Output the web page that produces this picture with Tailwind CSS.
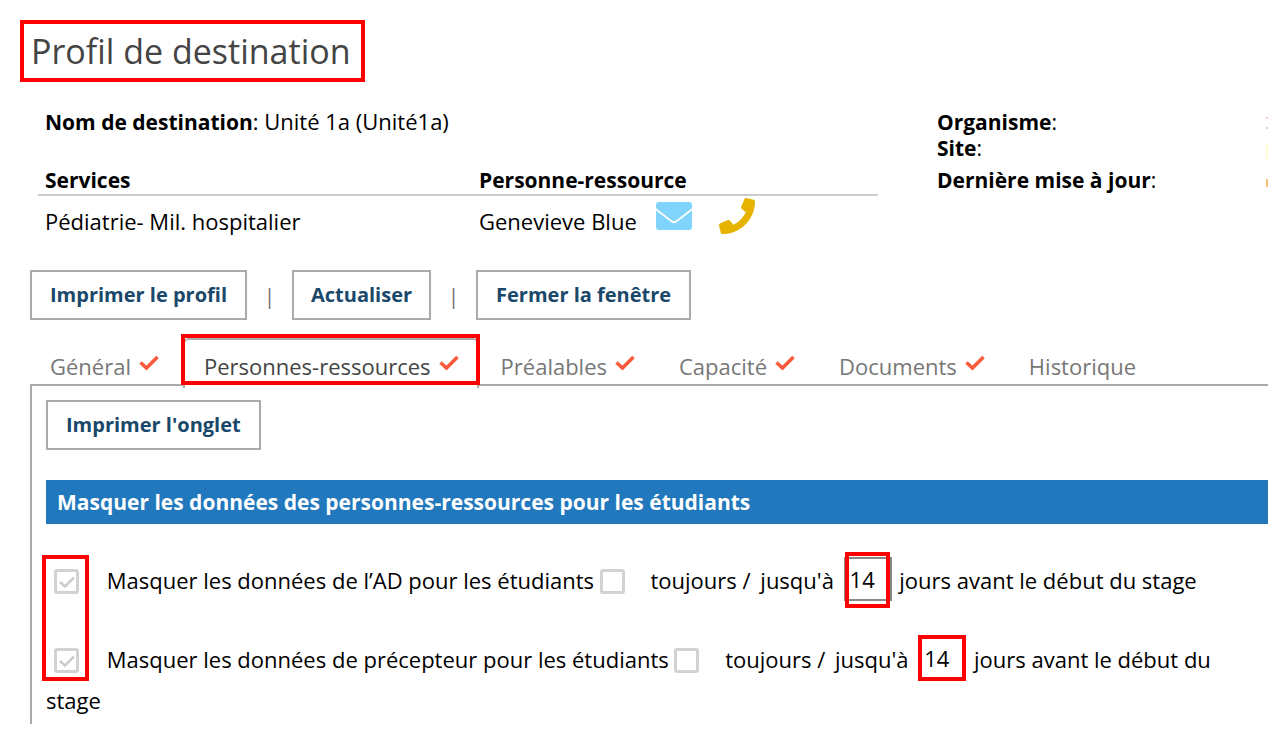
<!DOCTYPE html>
<html lang="fr">
<head>
    <meta charset="UTF-8">
    <meta name="viewport" content="width=device-width, initial-scale=1.0">
    <title>Profil de destination</title>
    <script src="https://cdn.jsdelivr.net/npm/@tailwindcss/browser@4"></script>
</head>
<body class="bg-white text-black text-[22px] font-['Open_Sans',sans-serif]">
    <svg class="hidden">
        <symbol id="check" viewBox="0 0 20 16"><path d="M1.5 7.5 L7.5 13 L18.5 2" fill="none" stroke="#fb5a3c" stroke-width="3.6"/></symbol>
    </svg>
    <div class="pt-5 pl-5 pr-[10px]">
        <h1 class="inline-block border-4 border-[#ff0000] pl-[7px] pr-[10px] text-[34px] leading-[54px] text-[#444]">Profil de destination</h1>

        <div class="pl-[10px]">
            <!-- Destination info -->
            <div class="flex justify-between pt-[26px]">
                <div class="w-[848px] pl-2">
                    <p class="pl-[7px] leading-[26px]"><b class="text-[21px] font-bold">Nom de destination</b>: Unité 1a (Unité1a)</p>
                    <table class="mt-8 w-full text-left">
                        <thead>
                            <tr class="border-b-2 border-[#ccc] text-[21px] leading-[27px]">
                                <th class="w-[434px] pl-[7px] font-bold">Services</th>
                                <th class="pl-[7px] font-bold">Personne-ressource</th>
                            </tr>
                        </thead>
                        <tbody>
                            <tr class="leading-[26px] align-bottom">
                                <td class="pl-[7px] pt-[2px]">Pédiatrie- Mil. hospitalier</td>
                                <td class="pl-[7px] pt-[2px]">
                                    <div class="flex items-end">
                                        <span>Genevieve Blue</span>
                                        <a href="#" aria-label="Courriel" class="ml-[19px] mb-1">
                                            <svg class="w-9 h-7" viewBox="0 0 36 28">
                                                <path d="M3 0H33Q36 0 36 3V5Q36 6 35 7L20 18.500Q18 20 16 18.500L1 7Q0 6 0 5V3Q0 0 3 0Z" fill="#80d4fb"/>
                                                <path d="M0 8.500L15 20Q18 22.500 21 20L36 8.500V25Q36 28 33 28H3Q0 28 0 25Z" fill="#80d4fb"/>
                                            </svg>
                                        </a>
                                        <a href="#" aria-label="Téléphone" class="ml-[27px]">
                                            <svg class="w-9 h-9" viewBox="0 0 512 512">
                                                <path fill="#e6b400" d="M493.400 24.600l-104-24c-11.300-2.600-22.900 3.300-27.500 13.900l-48 112c-4.200 9.800-1.400 21.300 6.900 28l60.600 49.600c-36 76.700-98.900 140.500-177.200 177.200l-49.600-60.600c-6.800-8.300-18.200-11.100-28-6.900l-112 48C3.900 366.500-2 378.100.6 389.400l24 104C27.100 504.200 36.700 512 48 512c256.100 0 464-207.500 464-464 0-11.200-7.700-20.900-18.600-23.400z"/>
                                            </svg>
                                        </a>
                                    </div>
                                </td>
                            </tr>
                        </tbody>
                    </table>
                </div>
                <div class="w-[331px] pt-px flex justify-between text-[21px] leading-[26px]">
                    <div>
                        <p><b class="font-bold">Organisme</b>:</p>
                        <p><b class="font-bold">Site</b>:</p>
                        <p class="mt-[6px]"><b class="font-bold">Dernière mise à jour</b>:</p>
                    </div>
                    <div class="w-[2px]">
                        <div class="mt-2 h-3 border-y-2 border-[#f8c8c8]"></div>
                        <div class="mt-[14px] h-4 bg-[#fffbd0]"></div>
                        <div class="mt-5 h-2 bg-[#f5c274]"></div>
                    </div>
                </div>
            </div>

            <!-- Actions -->
            <div class="mt-9 flex items-center text-[#777]">
                <button class="h-[50px] border-2 border-[#aaa] px-[18px] text-[20px] font-bold text-[#19486a]">Imprimer le profil</button>
                <span class="w-[45px] text-center">|</span>
                <button class="h-[50px] border-2 border-[#aaa] px-[17px] text-[20px] font-bold text-[#19486a]">Actualiser</button>
                <span class="w-[45px] text-center">|</span>
                <button class="h-[50px] border-2 border-[#aaa] px-[18px] text-[20px] font-bold text-[#19486a]">Fermer la fenêtre</button>
            </div>

            <!-- Tabs -->
            <nav class="mt-[18px] flex text-[#777] leading-[44px]">
                <a href="#" class="flex items-center gap-2 pl-5 pr-6 pt-[6px]">Général <svg class="w-5 h-4 -mt-[6px]"><use href="#check"/></svg></a>
                <a href="#" class="relative z-10 flex items-center gap-2 rounded-t-md border-2 border-b-0 border-[#aaa] bg-white pl-[19px] pr-[18px] pt-1 text-[#444]">Personnes-ressources <svg class="w-5 h-4 -mt-[6px]"><use href="#check"/></svg>
                    <span class="absolute -left-1 -right-[3px] -top-[6px] h-[51px] border-4 border-[#ff0000]"></span>
                </a>
                <a href="#" class="flex items-center gap-2 px-[22px] pt-[6px]">Préalables <svg class="w-5 h-4 -mt-[6px]"><use href="#check"/></svg></a>
                <a href="#" class="flex items-center gap-2 px-[22px] pt-[6px]">Capacité <svg class="w-5 h-4 -mt-[6px]"><use href="#check"/></svg></a>
                <a href="#" class="flex items-center gap-2 px-[22px] pt-[6px]">Documents <svg class="w-5 h-4 -mt-[6px]"><use href="#check"/></svg></a>
                <a href="#" class="px-[22px] pt-[6px]">Historique</a>
            </nav>

            <!-- Tab panel -->
            <div class="-mt-1 border-l-2 border-t-2 border-[#aaa] pl-[14px] pt-[14px] pb-1">
                <button class="block h-[50px] border-2 border-[#aaa] px-[18px] text-[20px] font-bold text-[#19486a]">Imprimer l'onglet</button>
                <h2 class="mt-[30px] bg-[#2178bc] pl-[11px] text-[21px] font-bold leading-[44px] text-white">Masquer les données des personnes-ressources pour les étudiants</h2>
                <div class="relative mt-9 leading-10">
                    <p>
                        <span class="relative ml-2 mb-1 inline-block size-[25px] align-middle">
                            <input id="ad" type="checkbox" checked disabled class="block size-[25px] appearance-none rounded-[3px] border-3 border-[#d2d2d2]">
                            <svg class="absolute left-[5px] top-[7px] w-4 h-3" viewBox="0 0 16 12"><path d="M1 6L6 10.500L15 1.500" fill="none" stroke="#ccc" stroke-width="2.500"/></svg>
                        </span>
                        <label for="ad" class="ml-[22px]">Masquer les données de l’AD pour les étudiants</label>
                        <input id="ad-always" type="checkbox" class="mb-1 inline-block size-[25px] appearance-none rounded-[3px] border-3 border-[#d2d2d2] align-middle">
                        <label for="ad-always" class="ml-5">toujours /</label>
                        <label for="ad-days" class="ml-1">jusqu'à</label>
                        <span class="relative -mt-2 mr-[2px] ml-1 inline-block align-middle">
                            <input id="ad-days" type="text" value="14" class="block h-11 w-12 border-2 border-[#888] px-1">
                            <span class="pointer-events-none absolute left-px right-[2px] -top-[5px] h-14 border-4 border-[#ff0000]"></span>
                        </span>
                        jours avant le début du stage
                    </p>
                    <p class="mt-[38px]">
                        <span class="relative ml-2 mb-1 inline-block size-[25px] align-middle">
                            <input id="prec" type="checkbox" checked disabled class="block size-[25px] appearance-none rounded-[3px] border-3 border-[#d2d2d2]">
                            <svg class="absolute left-[5px] top-[7px] w-4 h-3" viewBox="0 0 16 12"><path d="M1 6L6 10.500L15 1.500" fill="none" stroke="#ccc" stroke-width="2.500"/></svg>
                        </span>
                        <label for="prec" class="ml-[22px]">Masquer les données de précepteur pour les étudiants</label>
                        <input id="prec-always" type="checkbox" class="mb-1 inline-block size-[25px] appearance-none rounded-[3px] border-3 border-[#d2d2d2] align-middle">
                        <label for="prec-always" class="ml-5">toujours /</label>
                        <label for="prec-days" class="ml-1">jusqu'à</label>
                        <span class="relative -mt-2 mr-[2px] ml-1 inline-block align-middle">
                            <input id="prec-days" type="text" value="14" class="block h-11 w-12 border-2 border-[#888] px-1">
                            <span class="pointer-events-none absolute inset-x-0 -top-px h-[46px] border-4 border-[#ff0000]"></span>
                        </span>
                        jours avant le début du stage
                    </p>
                    <span class="pointer-events-none absolute -left-1 -top-[5px] h-[126px] w-[47px] border-4 border-[#ff0000]"></span>
                </div>
            </div>
        </div>
    </div>
</body>
</html>
